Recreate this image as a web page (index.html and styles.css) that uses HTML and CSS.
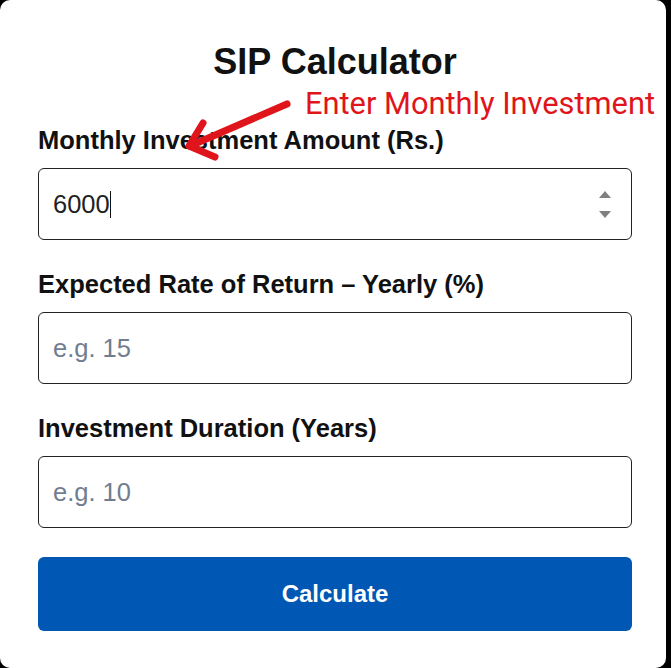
FILE: index.html
```html
<!DOCTYPE html>
<html lang="en">

<head>
    <meta charset="UTF-8">
    <meta name="viewport" content="width=device-width, initial-scale=1.0">
    <title>SIP Calculator</title>
    <link rel="stylesheet" href="styles.css">
</head>

<body>
    <div class="card">
        <h1>SIP Calculator</h1>

        <label for="monthly">Monthly Investment Amount (Rs.)</label>
        <div class="field">
            <input type="number" id="monthly" class="filled" value="6000">
            <span class="caret"></span>
            <span class="spin"><i class="up"></i><i class="down"></i></span>
        </div>

        <label for="rate">Expected Rate of Return – Yearly (%)</label>
        <div class="field">
            <input type="number" id="rate" placeholder="e.g. 15">
        </div>

        <label for="years">Investment Duration (Years)</label>
        <div class="field">
            <input type="number" id="years" placeholder="e.g. 10">
        </div>

        <button class="calc">Calculate</button>

        <!-- annotation on top of the form -->
        <div class="note">Enter Monthly Investment</div>
        <svg class="arrow" width="666" height="200" viewBox="0 0 666 200">
            <path d="M287 104 L190 146" />
            <path d="M203 123 L189 146 L215 157" />
        </svg>
    </div>
</body>

</html>
```

FILE: styles.css
```css
* {
    margin: 0;
    padding: 0;
    box-sizing: border-box;
}

body {
    background: #000;
    font-family: "Liberation Sans", Arial, sans-serif;
    color: #111;
}

.card {
    width: 666px;
    height: 668px;
    background: #fff;
    border-radius: 10px;
    padding: 41px 34px 0 38px;
    position: relative;
}

.card h1 {
    font-size: 36px;
    font-weight: bold;
    text-align: center;
    line-height: 41px;
    margin-bottom: 43px;
}

.card label {
    display: block;
    font-size: 25.5px;
    font-weight: bold;
    line-height: 30px;
    margin-bottom: 13px;
}

.field {
    height: 72px;
    border: 1px solid #222;
    border-radius: 6px;
    margin-bottom: 29px;
    padding: 0 20px 0 14px;
    display: flex;
    align-items: center;
}

.field input {
    flex: 1;
    min-width: 0;
    border: none;
    outline: none;
    background: transparent;
    font-family: "Liberation Sans", Arial, sans-serif;
    font-size: 25.5px;
    color: #222;
    -moz-appearance: textfield;
}

.field input.filled {
    flex: none;
    width: 57px;
}

.field input::-webkit-inner-spin-button,
.field input::-webkit-outer-spin-button {
    -webkit-appearance: none;
    margin: 0;
}

.field input::placeholder {
    color: #717d8f;
}

.caret {
    width: 1px;
    height: 27px;
    background: #111;
}

.spin {
    margin-left: auto;
    display: flex;
    flex-direction: column;
    gap: 13px;
}

.spin i {
    display: block;
    width: 0;
    height: 0;
    border-left: 6px solid transparent;
    border-right: 6px solid transparent;
}

.spin .up {
    border-bottom: 7px solid #808080;
}

.spin .down {
    border-top: 7px solid #808080;
}

.calc {
    display: block;
    width: 100%;
    height: 74px;
    margin-top: 3px;
    border: none;
    border-radius: 6px;
    background: #0057b4;
    color: #fff;
    font-family: "Liberation Sans", Arial, sans-serif;
    font-size: 24px;
    font-weight: bold;
}

.note {
    position: absolute;
    left: 305px;
    top: 89px;
    font-family: Roboto, "Noto Sans", sans-serif;
    font-size: 30.8px;
    line-height: 30px;
    color: #e0141b;
    white-space: nowrap;
}

.arrow {
    position: absolute;
    left: 0;
    top: 0;
    pointer-events: none;
}

.arrow path {
    fill: none;
    stroke: #e0141b;
    stroke-width: 7;
    stroke-linecap: round;
    stroke-linejoin: round;
}
```
